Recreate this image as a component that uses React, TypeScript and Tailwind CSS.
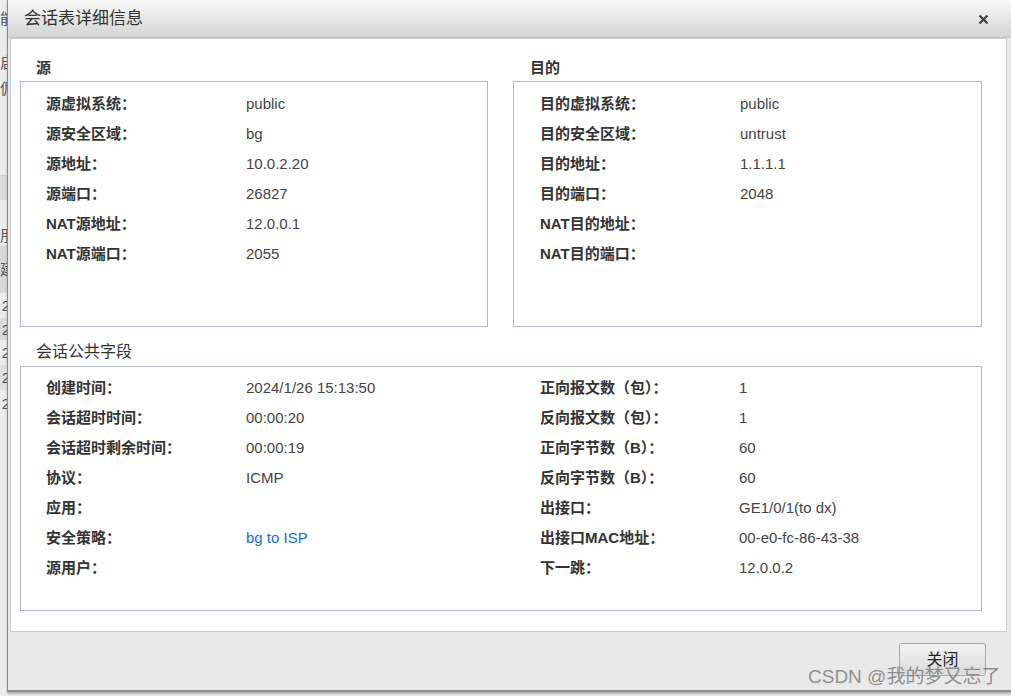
import React from 'react';

type Row = { label: string; value?: string; link?: boolean };

const srcRows: Row[] = [
  { label: '源虚拟系统：', value: 'public' },
  { label: '源安全区域：', value: 'bg' },
  { label: '源地址：', value: '10.0.2.20' },
  { label: '源端口：', value: '26827' },
  { label: 'NAT源地址：', value: '12.0.0.1' },
  { label: 'NAT源端口：', value: '2055' },
];

const dstRows: Row[] = [
  { label: '目的虚拟系统：', value: 'public' },
  { label: '目的安全区域：', value: 'untrust' },
  { label: '目的地址：', value: '1.1.1.1' },
  { label: '目的端口：', value: '2048' },
  { label: 'NAT目的地址：' },
  { label: 'NAT目的端口：' },
];

const commonLeft: Row[] = [
  { label: '创建时间：', value: '2024/1/26 15:13:50' },
  { label: '会话超时时间：', value: '00:00:20' },
  { label: '会话超时剩余时间：', value: '00:00:19' },
  { label: '协议：', value: 'ICMP' },
  { label: '应用：' },
  { label: '安全策略：', value: 'bg to ISP', link: true },
  { label: '源用户：' },
];

const commonRight: Row[] = [
  { label: '正向报文数（包）：', value: '1' },
  { label: '反向报文数（包）：', value: '1' },
  { label: '正向字节数（B）：', value: '60' },
  { label: '反向字节数（B）：', value: '60' },
  { label: '出接口：', value: 'GE1/0/1(to dx)' },
  { label: '出接口MAC地址：', value: '00-e0-fc-86-43-38' },
  { label: '下一跳：', value: '12.0.0.2' },
];

function Rows({ rows, labelW }: { rows: Row[]; labelW: string }) {
  return (
    <div className="flex flex-col">
      {rows.map((r) => (
        <div key={r.label} className="flex h-[30px] items-center">
          <div className={`${labelW} shrink-0 font-bold text-[#333]`}>{r.label}</div>
          <div className={r.link ? 'text-[#1a6cd0]' : 'text-[#444]'}>{r.value}</div>
        </div>
      ))}
    </div>
  );
}

// bits of the page that peek out left of the dialog
const sideBits = [
  { h: 'h-[36px]', t: '能', bg: 'bg-[#ececec]', line: false },
  { h: 'h-[12px]', t: '', bg: 'bg-[#ececec]', line: false },
  { h: 'h-[28px]', t: '启', bg: 'bg-[#ececec]', line: false },
  { h: 'h-[24px]', t: '伲', bg: 'bg-[#ececec]', line: false },
  { h: 'h-[76px]', t: '', bg: 'bg-[#ececec]', line: true },
  { h: 'h-[24px]', t: '', bg: 'bg-[#dcdcdc]', line: false },
  { h: 'h-[25px]', t: '', bg: 'bg-[#ececec]', line: false },
  { h: 'h-[20px]', t: '刖', bg: 'bg-[#ececec]', line: false },
  { h: 'h-[48px]', t: '建', bg: 'bg-[#d8d8d8]', line: false },
  { h: 'h-[25px]', t: '2', bg: 'bg-[#ececec]', line: false },
  { h: 'h-[22px]', t: '2', bg: 'bg-[#dadada]', line: false },
  { h: 'h-[25px]', t: '2', bg: 'bg-[#ececec]', line: false },
  { h: 'h-[25px]', t: '2', bg: 'bg-[#e0e0e0]', line: false },
  { h: 'h-[26px]', t: '2', bg: 'bg-[#ececec]', line: false },
];

export default function App() {
  return (
    <div
      className="relative flex h-[696px] w-[1011px] overflow-hidden bg-[#ececec] text-[15px]"
      style={{ fontFamily: '"Liberation Sans", "Noto Sans CJK SC", sans-serif' }}
    >
      {/* page behind the dialog */}
      <div className="flex w-[7px] shrink-0 flex-col overflow-hidden">
        {sideBits.map((b, i) => (
          <div
            key={i}
            className={`${b.h} ${b.bg} ${b.line ? 'border-b border-[#cfcfcf]' : ''} flex shrink-0 items-center justify-end whitespace-nowrap text-[15px] leading-none text-[#555]`}
          >
            <span className={b.t === '2' ? '-mr-[3px]' : '-mr-[8px]'}>{b.t}</span>
          </div>
        ))}
      </div>

      {/* dialog */}
      <div className="flex h-[692px] flex-1 flex-col border-b-2 border-l border-[#8c8c8c] bg-[#e9e9e9] shadow-[0_2px_2px_rgba(0,0,0,0.25)]">
        <div className="flex h-[38px] shrink-0 items-center justify-between border-b border-[#c4c4c4] bg-gradient-to-b from-[#f7f7f7] to-[#d5d5d5] pl-[16px] pr-[22px]">
          <span className="text-[17px] text-[#333]">会话表详细信息</span>
          <svg width="11" height="11" viewBox="0 0 11 11" className="mt-[1px]">
            <path d="M1.5 1.5 L9.5 9.5 M9.5 1.5 L1.5 9.5" stroke="#444" strokeWidth="2.4" />
          </svg>
        </div>

        <div className="ml-[2px] mr-[4px] flex h-[594px] flex-col border border-[#cbcbcb] bg-white pl-[9px] pr-[24px]">
          <div className="flex gap-[25px] pt-[19px]">
            <div className="w-[468px]">
              <div className="mb-[3px] h-[20px] pl-[16px] font-bold leading-[20px] text-[#333]">源</div>
              <div className="h-[246px] border border-[#b3b5c8] pl-[25px] pt-[7px]">
                <Rows rows={srcRows} labelW="w-[200px]" />
              </div>
            </div>
            <div className="w-[469px]">
              <div className="mb-[3px] h-[20px] pl-[17px] font-bold leading-[20px] text-[#333]">目的</div>
              <div className="h-[246px] border border-[#b3b5c8] pl-[26px] pt-[7px]">
                <Rows rows={dstRows} labelW="w-[200px]" />
              </div>
            </div>
          </div>

          <div className="mb-[4px] mt-[15px] h-[20px] pl-[16px] text-[16px] leading-[20px] text-[#333]">会话公共字段</div>
          <div className="flex h-[245px] w-[962px] border border-[#b3b5c8] pt-[6px]">
            <div className="w-[519px] pl-[25px]">
              <Rows rows={commonLeft} labelW="w-[200px]" />
            </div>
            <div>
              <Rows rows={commonRight} labelW="w-[199px]" />
            </div>
          </div>
        </div>

        <div className="flex flex-1 items-start justify-end pr-[25px] pt-[11px]">
          <button className="h-[33px] w-[87px] rounded-[3px] border border-[#a8a8a8] bg-gradient-to-b from-[#f2f2f2] to-[#dcdcdc] text-[16px] text-[#222]">
            关闭
          </button>
        </div>
      </div>

      <div className="pointer-events-none absolute left-[808px] top-[665px] whitespace-nowrap text-[19px] leading-[24px] text-[#777]/80">
        CSDN @我的梦又忘了
      </div>
    </div>
  );
}
